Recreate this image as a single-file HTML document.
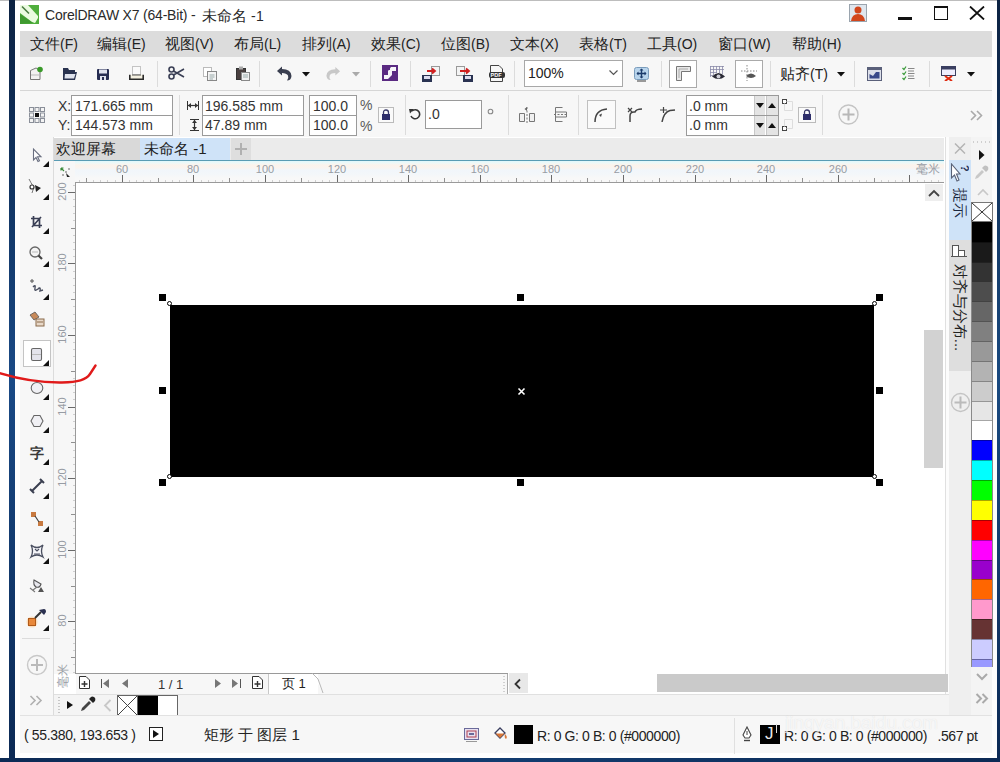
<!DOCTYPE html>
<html><head><meta charset="utf-8">
<style>
*{margin:0;padding:0;box-sizing:border-box}
html,body{width:1000px;height:762px;overflow:hidden;background:#fff}
body{position:relative;font-family:"Liberation Sans",sans-serif;color:#222}
.a{position:absolute}
.t{position:absolute;white-space:nowrap;line-height:1}
.sep{position:absolute;width:1px;background:#dcdcdc}
.box{position:absolute;background:#fff;border:1px solid #8a8a8a}
.rl{font-size:11px;color:#979ca4;width:40px;text-align:center}
.rv{transform:rotate(-90deg)}
.tri{position:absolute;width:0;height:0;border-left:6px solid transparent;border-bottom:6px solid #111}
</style></head><body>
<!-- window frame -->
<div class="a" style="left:0;top:0;width:1000px;height:1px;background:#bdbdbd"></div>
<div class="a" style="left:9px;top:0;width:6px;height:762px;background:linear-gradient(#0c2242,#1a4a86 50%,#0c2a55)"></div>
<div class="a" style="left:997px;top:0;width:3px;height:762px;background:linear-gradient(#0c2242,#1a4a80 50%,#0c2a55)"></div>
<div class="a" style="left:0;top:758px;width:1000px;height:4px;background:linear-gradient(90deg,#0c2a55,#123c70 50%,#0c2a55)"></div>

<!-- title bar -->
<div id="title">
<svg class="a" style="left:20px;top:5px" width="19" height="19" viewBox="0 0 19 19"><rect width="19" height="19" fill="#4fae3c"/><path d="M0 0 L8 0 L18 11 L18 13 L15 18 L12 17 L0 8 Z" fill="#eafbe0"/><path d="M2 1.5 L9 8.5" stroke="#4a7a40" stroke-width="1.6"/><path d="M0 9 L13 18 L0 19 Z" fill="#3f9a30"/></svg>
<div class="t" style="left:45px;top:8px;font-size:14px;color:#2a2a2a;letter-spacing:-0.2px">CorelDRAW X7 (64-Bit) -</div><div class="t" style="left:202px;top:8px;font-size:14px;color:#2a2a2a"><span style="font-size:15px">未命名</span> <span style="letter-spacing:0.5px">-1</span></div>
<svg class="a" style="left:849px;top:4px" width="18" height="18" viewBox="0 0 18 18"><rect x="0.5" y="0.5" width="17" height="17" fill="#dfe6ee" stroke="#9aa4ae"/><circle cx="9" cy="6" r="3.5" fill="#d2461c"/><path d="M2 17 Q3 10 9 10 Q15 10 16 17 Z" fill="#d2461c"/></svg>
<div class="a" style="left:898px;top:17px;width:14px;height:3px;background:#111"></div>
<div class="a" style="left:934px;top:6px;width:14px;height:14px;border:1.5px solid #111;border-top-width:2.5px"></div>
<svg class="a" style="left:969px;top:6px" width="16" height="14" viewBox="0 0 16 14"><path d="M1 0.5 L15 13.5 M15 0.5 L1 13.5" stroke="#111" stroke-width="1.8"/></svg>
</div>

<!-- menu bar -->
<div class="a" style="left:20px;top:31px;width:972px;height:26px;background:#dcdcdc"></div>
<div id="menu" style="font-size:15px">
<div class="t" style="left:30px;top:36px">文件<span style="font-size:14px">(F)</span></div>
<div class="t" style="left:97px;top:36px">编辑<span style="font-size:14px">(E)</span></div>
<div class="t" style="left:165px;top:36px">视图<span style="font-size:14px">(V)</span></div>
<div class="t" style="left:234px;top:36px">布局<span style="font-size:14px">(L)</span></div>
<div class="t" style="left:302px;top:36px">排列<span style="font-size:14px">(A)</span></div>
<div class="t" style="left:371px;top:36px">效果<span style="font-size:14px">(C)</span></div>
<div class="t" style="left:441px;top:36px">位图<span style="font-size:14px">(B)</span></div>
<div class="t" style="left:510px;top:36px">文本<span style="font-size:14px">(X)</span></div>
<div class="t" style="left:579px;top:36px">表格<span style="font-size:14px">(T)</span></div>
<div class="t" style="left:647px;top:36px">工具<span style="font-size:14px">(O)</span></div>
<div class="t" style="left:718px;top:36px">窗口<span style="font-size:14px">(W)</span></div>
<div class="t" style="left:792px;top:36px">帮助<span style="font-size:14px">(H)</span></div>
</div>

<!-- toolbar -->
<div class="a" style="left:20px;top:57px;width:972px;height:33px;background:#f7f7f7"></div>
<div class="a" style="left:20px;top:90px;width:972px;height:1px;background:#d6d6d6"></div>

<!-- toolbar icons -->
<svg class="a" style="left:29px;top:66px" width="15" height="15" viewBox="0 0 15 15"><path d="M1.5 4.5 L7 2 L11 4 L11 13.5 L1.5 13.5 Z" fill="#f2f2f2" stroke="#777"/><path d="M2 9 L11 9" stroke="#bbb"/><circle cx="11" cy="3.5" r="2.8" fill="#3a9a2a"/></svg>
<svg class="a" style="left:62px;top:67px" width="16" height="14" viewBox="0 0 16 14"><path d="M1 1 L6 1 L7 3 L13 3 L13 5 L1 5 Z" fill="#2a3350"/><path d="M1 5 L15 5 L13 13 L1 13 Z" fill="#2a3350"/><path d="M3 7 L13.5 7 L12 11.5 L2.5 11.5 Z" fill="#dfe3ee"/></svg>
<svg class="a" style="left:97px;top:69px" width="12" height="11" viewBox="0 0 12 11"><rect x="0" y="0" width="12" height="11" rx="1" fill="#262d52"/><rect x="2" y="0.5" width="8" height="4" fill="#dfe2ee"/><rect x="3" y="7" width="6" height="4" fill="#dfe2ee"/><rect x="5" y="8" width="2" height="3" fill="#262d52"/></svg>
<svg class="a" style="left:129px;top:66px" width="15" height="15" viewBox="0 0 15 15"><rect x="3.5" y="0.5" width="8" height="8" fill="#fafafa" stroke="#c4c4c4"/><path d="M0.8 8.8 L0.8 13.2 L14.2 13.2 L14.2 8.8" fill="#f4f0e0" stroke="#2a2a2a" stroke-width="1.6"/><path d="M3 9 H12" stroke="#555"/></svg>
<div class="sep" style="left:157px;top:61px;height:26px"></div>
<svg class="a" style="left:168px;top:66px" width="17" height="14" viewBox="0 0 17 14"><circle cx="3.5" cy="3.5" r="2.5" fill="none" stroke="#3a3f55" stroke-width="1.6"/><circle cx="3.5" cy="10.5" r="2.5" fill="none" stroke="#3a3f55" stroke-width="1.6"/><path d="M5.5 5 L16 11 M5.5 9 L16 3" stroke="#3a3f55" stroke-width="1.6"/></svg>
<svg class="a" style="left:203px;top:67px" width="14" height="14" viewBox="0 0 14 14"><rect x="0.5" y="0.5" width="8" height="9" fill="#fff" stroke="#bbb"/><rect x="4.5" y="4.5" width="9" height="9" fill="#f4f4f4" stroke="#888"/><path d="M6.5 8 L11.5 8 M6.5 10 L11.5 10 M6.5 12 L10 12" stroke="#9aa"/></svg>
<svg class="a" style="left:236px;top:66px" width="14" height="15" viewBox="0 0 14 15"><rect x="0.5" y="2.5" width="9" height="11" fill="#4a4040" stroke="#333"/><rect x="3" y="0.5" width="4" height="3" fill="#aaa"/><rect x="5.5" y="6.5" width="8" height="8" fill="#f0f0f0" stroke="#888"/><path d="M7 9 L12 9 M7 11 L12 11" stroke="#9aa"/></svg>
<div class="sep" style="left:259px;top:61px;height:26px"></div>
<svg class="a" style="left:276px;top:66px" width="17" height="15" viewBox="0 0 17 15"><path d="M1 5 L6 0.5 L6 3 Q15 3 15.5 10 Q15 14.5 11 14.5 Q13 12 12 9.5 Q10.5 7 6 7 L6 9.5 Z" fill="#3a3f50"/></svg>
<svg class="a" style="left:302px;top:72px" width="8" height="5" viewBox="0 0 8 5"><path d="M0 0 L8 0 L4 4.5 Z" fill="#111"/></svg>
<svg class="a" style="left:325px;top:66px" width="16" height="15" viewBox="0 0 17 15"><path d="M16 5 L11 0.5 L11 3 Q2 3 1.5 10 Q2 14.5 6 14.5 Q4 12 5 9.5 Q6.5 7 11 7 L11 9.5 Z" fill="#c8c8c8"/></svg>
<svg class="a" style="left:352px;top:72px" width="8" height="5" viewBox="0 0 8 5"><path d="M0 0 L8 0 L4 4.5 Z" fill="#aaa"/></svg>
<div class="sep" style="left:370px;top:61px;height:26px"></div>
<svg class="a" style="left:382px;top:65px" width="16" height="16" viewBox="0 0 16 16"><rect width="16" height="16" fill="#5a2a82"/><path d="M9 2 L14 2 L14 6 L10 6 L10 10 L6 14 L2 14 L2 10 L6 10 L6 6 Z" fill="#fff" opacity="0.95"/><path d="M4 3 L8 3 L8 5 L4 5 Z M9 11 L13 11 L13 14 L9 14 Z" fill="#5a2a82"/></svg>
<div class="sep" style="left:410px;top:61px;height:26px"></div>
<svg class="a" style="left:422px;top:66px" width="18" height="16" viewBox="0 0 18 16"><rect x="9.5" y="0.5" width="8" height="9" fill="#f4f4f4" stroke="#999"/><path d="M5 5 L13 5 M10 2.5 L13 5 L10 7.5" stroke="#d02020" stroke-width="1.8" fill="none"/><rect x="0" y="9" width="10" height="7" fill="#2a3352"/><rect x="2" y="10" width="6" height="3" fill="#dde"/></svg>
<svg class="a" style="left:456px;top:66px" width="17" height="16" viewBox="0 0 17 16"><rect x="0.5" y="0.5" width="8" height="9" fill="#f4f4f4" stroke="#999"/><path d="M4 5 L13 5 M10 2.5 L13 5 L10 7.5" stroke="#d02020" stroke-width="1.8" fill="none"/><rect x="7" y="9" width="10" height="7" fill="#2a3352"/><rect x="9" y="10" width="6" height="3" fill="#dde"/></svg>
<svg class="a" style="left:489px;top:65px" width="16" height="17" viewBox="0 0 16 17"><path d="M1.5 0.5 L10 0.5 L13.5 4 L13.5 16.5 L1.5 16.5 Z" fill="#f7f7f7" stroke="#444"/><rect x="0" y="7" width="16" height="6" rx="2" fill="#333"/><text x="1.5" y="12" font-size="5.5" font-family="Liberation Sans" font-weight="bold" fill="#fff">PDF</text></svg>
<div class="sep" style="left:514px;top:61px;height:26px"></div>
<div class="box" style="left:524px;top:60px;width:99px;height:27px;border-color:#a8a8a8"></div>
<div class="t" style="left:528px;top:66px;font-size:14px;color:#222">100%</div>
<svg class="a" style="left:609px;top:70px" width="9" height="6" viewBox="0 0 9 6"><path d="M0.5 0.5 L4.5 4.5 L8.5 0.5" stroke="#555" stroke-width="1.2" fill="none"/></svg>
<svg class="a" style="left:634px;top:67px" width="15" height="15" viewBox="0 0 15 15"><rect x="0.5" y="0.5" width="14" height="12" rx="2" fill="#b8d4ec" stroke="#7a9cbc"/><path d="M7.5 2 L7.5 11 M3 6.5 L12 6.5" stroke="#1a3a6a" stroke-width="1.4"/><path d="M7.5 1.5 L5.5 3.5 L9.5 3.5 Z M7.5 11.5 L5.5 9.5 L9.5 9.5 Z M2.5 6.5 L4.5 4.5 L4.5 8.5 Z M12.5 6.5 L10.5 4.5 L10.5 8.5 Z" fill="#1a3a6a"/><rect x="3" y="13" width="9" height="2" fill="#999"/></svg>
<div class="sep" style="left:661px;top:61px;height:26px"></div>
<div class="box" style="left:669px;top:60px;width:28px;height:28px;border-color:#aaa"></div>
<svg class="a" style="left:676px;top:66px" width="15" height="15" viewBox="0 0 15 15"><path d="M0.5 0.5 L14.5 0.5 L14.5 5.5 L5.5 5.5 L5.5 14.5 L0.5 14.5 Z" fill="#e8e8e8" stroke="#777"/><path d="M3 3 L12 3 M3 3 L3 12" stroke="#aaa"/></svg>
<svg class="a" style="left:709px;top:65px" width="17" height="16" viewBox="0 0 17 16"><path d="M1.5 1V12 M4.5 1V10 M7.5 1V8 M10.5 1V8 M13.5 1V9 M1 1.5H15 M1 4.5H15 M1 7.5H8 M1 10.5H4" stroke="#8a8aa8" stroke-width="0.8"/><path d="M3 11.5 Q9.5 4.5 16 11.5 Q9.5 16.5 3 11.5 Z" fill="#2a2a35"/><circle cx="9.5" cy="11.5" r="2" fill="#cfcfd8"/></svg>
<div class="box" style="left:735px;top:60px;width:28px;height:28px;border-color:#aaa"></div>
<svg class="a" style="left:741px;top:65px" width="17" height="16" viewBox="0 0 17 16"><path d="M6 0 L6 16" stroke="#888" stroke-dasharray="1.5 1.5"/><path d="M0 6 L16 6" stroke="#888" stroke-dasharray="1.5 1.5"/><path d="M5 11 Q10 6 15 11 Q10 15 5 11 Z" fill="#555"/></svg>
<div class="sep" style="left:770px;top:61px;height:26px"></div>
<div class="t" style="left:780px;top:66px;font-size:15px;color:#222">贴齐<span style="font-size:14px">(T)</span></div>
<svg class="a" style="left:837px;top:72px" width="8" height="5" viewBox="0 0 8 5"><path d="M0 0 L8 0 L4 4.5 Z" fill="#111"/></svg>
<div class="sep" style="left:854px;top:61px;height:26px"></div>
<svg class="a" style="left:867px;top:67px" width="15" height="14" viewBox="0 0 15 14"><rect x="0.5" y="0.5" width="14" height="13" fill="#dde0ea" stroke="#5a607a"/><rect x="0.5" y="0.5" width="14" height="2.5" fill="#5a607a"/><path d="M2.5 11.5 L2.5 7 L6 9 L9 5 L12.5 5 L12.5 11.5 Z" fill="#3a4a8a"/></svg>
<svg class="a" style="left:902px;top:66px" width="13" height="15" viewBox="0 0 13 15"><path d="M0.5 2 L2 3.5 L4 0.5 M0.5 7 L2 8.5 L4 5.5 M0.5 12 L2 13.5 L4 10.5" stroke="#3a9a3a" stroke-width="1.2" fill="none"/><path d="M6 2.5 L12.5 2.5 M6 5 L12 5 M6 7.5 L12.5 7.5 M6 10 L12 10 M6 12.5 L12.5 12.5" stroke="#888"/></svg>
<div class="sep" style="left:929px;top:61px;height:26px"></div>
<svg class="a" style="left:941px;top:66px" width="15" height="15" viewBox="0 0 15 15"><rect x="0.5" y="0.5" width="14" height="9" fill="#eef" stroke="#3a3f60"/><rect x="0.5" y="0.5" width="14" height="3" fill="#3a3f60"/><path d="M4 10 L11 15 M11 10 L4 15" stroke="#e02a10" stroke-width="2"/></svg>
<svg class="a" style="left:967px;top:72px" width="8" height="5" viewBox="0 0 8 5"><path d="M0 0 L8 0 L4 4.5 Z" fill="#111"/></svg>

<!-- property bar -->
<div class="a" style="left:20px;top:91px;width:972px;height:46px;background:#f7f7f7"></div>

<!-- property bar content -->
<svg class="a" style="left:29px;top:107px" width="16" height="16" viewBox="0 0 16 16"><g fill="#f4f4f4" stroke="#8a8f99" stroke-width="1"><rect x="0.5" y="0.5" width="4" height="4"/><rect x="6" y="0.5" width="4" height="4"/><rect x="11.5" y="0.5" width="4" height="4"/><rect x="0.5" y="6" width="4" height="4"/><rect x="11.5" y="6" width="4" height="4"/><rect x="0.5" y="11.5" width="4" height="4"/><rect x="6" y="11.5" width="4" height="4"/><rect x="11.5" y="11.5" width="4" height="4"/></g><rect x="6" y="6" width="4" height="4" fill="#111"/></svg>
<div class="t" style="left:58px;top:99px;font-size:14px;color:#333">X:</div>
<div class="t" style="left:58px;top:118px;font-size:14px;color:#333">Y:</div>
<div class="box" style="left:71px;top:95px;width:102px;height:21px;border-color:#9a9a9a"></div>
<div class="box" style="left:71px;top:115px;width:102px;height:21px;border-color:#9a9a9a"></div>
<div class="t" style="left:75px;top:99px;font-size:14px;color:#333">171.665 mm</div>
<div class="t" style="left:75px;top:118px;font-size:14px;color:#333">144.573 mm</div>
<div class="sep" style="left:179px;top:95px;height:40px"></div>
<svg class="a" style="left:187px;top:101px" width="12" height="9" viewBox="0 0 12 9"><path d="M0.5 0 L0.5 9 M11.5 0 L11.5 9" stroke="#333"/><path d="M1 4.5 L11 4.5" stroke="#333" stroke-width="1.2"/><path d="M1 4.5 L4 2 L4 7 Z M11 4.5 L8 2 L8 7 Z" fill="#333"/></svg>
<svg class="a" style="left:190px;top:119px" width="9" height="12" viewBox="0 0 9 12"><path d="M0 0.5 L9 0.5 M0 11.5 L9 11.5" stroke="#333"/><path d="M4.5 1 L4.5 11" stroke="#333" stroke-width="1.2"/><path d="M4.5 1 L2 4 L7 4 Z M4.5 11 L2 8 L7 8 Z" fill="#333"/></svg>
<div class="box" style="left:202px;top:95px;width:102px;height:21px;border-color:#9a9a9a"></div>
<div class="box" style="left:202px;top:115px;width:102px;height:21px;border-color:#9a9a9a"></div>
<div class="t" style="left:205px;top:99px;font-size:14px;color:#333">196.585 mm</div>
<div class="t" style="left:205px;top:118px;font-size:14px;color:#333">47.89 mm</div>
<div class="box" style="left:309px;top:95px;width:48px;height:21px;border-color:#9a9a9a"></div>
<div class="box" style="left:309px;top:115px;width:48px;height:21px;border-color:#9a9a9a"></div>
<div class="t" style="left:313px;top:99px;font-size:14px;color:#333">100.0</div>
<div class="t" style="left:313px;top:118px;font-size:14px;color:#333">100.0</div>
<div class="t" style="left:360px;top:98px;font-size:14px;color:#5a5a5a">%</div>
<div class="t" style="left:360px;top:119px;font-size:14px;color:#5a5a5a">%</div>
<div class="a" style="left:378px;top:107px;width:16px;height:16px;border:1px solid #bbb;background:#fafafa"></div>
<svg class="a" style="left:381px;top:109px" width="10" height="11" viewBox="0 0 10 11"><path d="M2.5 5 L2.5 3.5 Q2.5 1 5 1 Q7.5 1 7.5 3.5 L7.5 5" stroke="#3a3a6a" stroke-width="1.3" fill="none"/><rect x="1" y="5" width="8" height="6" fill="#2e2e6a"/></svg>
<div class="sep" style="left:405px;top:95px;height:40px"></div>
<svg class="a" style="left:409px;top:108px" width="12" height="12" viewBox="0 0 12 12"><path d="M3 3 A4.5 4.5 0 1 1 2 8" stroke="#333" stroke-width="1.6" fill="none"/><path d="M0 1 L5 1 L1 5.5 Z" fill="#333"/></svg>
<div class="box" style="left:425px;top:100px;width:57px;height:29px;border-color:#9a9a9a"></div>
<div class="t" style="left:428px;top:107px;font-size:14px;color:#333">.0</div>
<svg class="a" style="left:487px;top:108px" width="7" height="7" viewBox="0 0 7 7"><circle cx="3.5" cy="3.5" r="2.3" stroke="#888" stroke-width="1.1" fill="none"/></svg>
<div class="sep" style="left:508px;top:95px;height:40px"></div>
<svg class="a" style="left:519px;top:107px" width="16" height="16" viewBox="0 0 16 16"><path d="M0.5 14.5 L0.5 6.5 L5.5 6.5 L5.5 14.5 Z M10.5 14.5 L10.5 6.5 L15.5 6.5 L15.5 14.5 Z" stroke="#777" fill="#f0f0f0"/><path d="M8 0 L8 16" stroke="#777" stroke-dasharray="2 1.5"/><path d="M5.5 2 L8 0 L8 4 Z" fill="#666"/></svg>
<svg class="a" style="left:554px;top:107px" width="14" height="15" viewBox="0 0 14 15"><path d="M0 7.5 L14 7.5" stroke="#777" stroke-dasharray="2 1.5"/><path d="M1.5 0.5 L8.5 0.5 M1.5 0.5 L1.5 14.5 L8.5 14.5 M1.5 5 L12.5 5 L12.5 10 L1.5 10" stroke="#777" fill="none"/></svg>
<div class="sep" style="left:578px;top:95px;height:40px"></div>
<div class="box" style="left:587px;top:100px;width:29px;height:29px;border-color:#c0c0c0;background:#fafafa"></div>
<svg class="a" style="left:593px;top:106px" width="17" height="17" viewBox="0 0 17 17"><path d="M2 16 Q2 4 14 3" stroke="#444" stroke-width="1.5" fill="none"/><path d="M6 9 L9 7.5 L8 11 Z" fill="#444"/></svg>
<svg class="a" style="left:627px;top:107px" width="16" height="15" viewBox="0 0 16 15"><path d="M3 15 L3 9 Q3 5 7 5 L8 5 Q9 2 15 2" stroke="#444" stroke-width="1.5" fill="none"/><path d="M1 1 L5 5 M5 1 L1 5" stroke="#444" stroke-width="1.2"/></svg>
<svg class="a" style="left:660px;top:107px" width="16" height="15" viewBox="0 0 16 15"><path d="M2 15 Q4 5 10 3.5 L15 3" stroke="#444" stroke-width="1.5" fill="none"/><path d="M0 3 L7 3 M3.5 0 L3.5 6" stroke="#444" stroke-width="1.2"/></svg>
<div class="box" style="left:686px;top:95px;width:93px;height:21px;border-color:#9a9a9a"></div>
<div class="box" style="left:686px;top:115px;width:93px;height:21px;border-color:#9a9a9a"></div>
<div class="a" style="left:754px;top:96px;width:11px;height:19px;background:#e4e4e4;border-left:1px solid #c8c8c8"></div>
<div class="a" style="left:766px;top:96px;width:12px;height:19px;background:#e4e4e4;border-left:1px solid #c8c8c8"></div>
<div class="a" style="left:754px;top:116px;width:11px;height:19px;background:#e4e4e4;border-left:1px solid #c8c8c8"></div>
<div class="a" style="left:766px;top:116px;width:12px;height:19px;background:#e4e4e4;border-left:1px solid #c8c8c8"></div>
<svg class="a" style="left:756px;top:103px" width="8" height="5"><path d="M0 0 L8 0 L4 5 Z" fill="#111"/></svg>
<svg class="a" style="left:768px;top:103px" width="8" height="5"><path d="M0 5 L8 5 L4 0 Z" fill="#111"/></svg>
<svg class="a" style="left:756px;top:123px" width="8" height="5"><path d="M0 0 L8 0 L4 5 Z" fill="#111"/></svg>
<svg class="a" style="left:768px;top:123px" width="8" height="5"><path d="M0 5 L8 5 L4 0 Z" fill="#111"/></svg>
<div class="t" style="left:689px;top:99px;font-size:14px;color:#333">.0 mm</div>
<div class="t" style="left:689px;top:118px;font-size:14px;color:#333">.0 mm</div>
<svg class="a" style="left:782px;top:99px" width="11" height="12" viewBox="0 0 11 12"><rect x="0.5" y="0.5" width="4" height="4" fill="#fff" stroke="#444"/><path d="M4.5 2.5 L10.5 2.5 L10.5 11.5 L2.5 11.5 L2.5 4.5" stroke="#ddd" fill="none"/></svg>
<svg class="a" style="left:782px;top:119px" width="11" height="12" viewBox="0 0 11 12"><rect x="0.5" y="7.5" width="4" height="4" fill="#fff" stroke="#444"/><path d="M2.5 7.5 L2.5 0.5 L10.5 0.5 L10.5 9.5 L4.5 9.5" stroke="#ddd" fill="none"/></svg>
<div class="a" style="left:798px;top:107px;width:18px;height:16px;border:1px solid #bbb;background:#fafafa"></div>
<svg class="a" style="left:802px;top:109px" width="10" height="11" viewBox="0 0 10 11"><path d="M2.5 5 L2.5 3.5 Q2.5 1 5 1 Q7.5 1 7.5 3.5 L7.5 5" stroke="#3a3a6a" stroke-width="1.3" fill="none"/><rect x="1" y="5" width="8" height="6" fill="#2e2e6a"/></svg>
<div class="sep" style="left:822px;top:95px;height:40px"></div>
<svg class="a" style="left:838px;top:104px" width="21" height="21" viewBox="0 0 21 21"><circle cx="10.5" cy="10.5" r="9.5" stroke="#c4c4c4" stroke-width="1.4" fill="none"/><path d="M10.5 4.5 L10.5 16.5 M4.5 10.5 L16.5 10.5" stroke="#b8b8b8" stroke-width="2"/></svg>
<svg class="a" style="left:970px;top:110px" width="14" height="11" viewBox="0 0 14 11"><path d="M1 1 L5.5 5.5 L1 10 M7 1 L11.5 5.5 L7 10" stroke="#aaa" stroke-width="1.6" fill="none"/></svg>

<!-- tab bar -->
<div class="a" style="left:54px;top:138px;width:890px;height:22px;background:#ebebeb"></div>

<!-- left toolbox -->
<div class="a" style="left:20px;top:137px;width:33px;height:579px;background:#f7f7f7"></div>
<div class="a" style="left:53px;top:137px;width:1px;height:579px;background:#dcdcdc"></div>

<!-- toolbox -->
<svg class="a" style="left:20px;top:138px" width="34" height="580" viewBox="0 0 34 580">
<g fill="#111">
<path d="M29 23 L29 29 L23 29 Z"/>
<path d="M29 56 L29 62 L23 62 Z"/>
<path d="M29 90 L29 96 L23 96 Z"/>
<path d="M29 123 L29 129 L23 129 Z"/>
<path d="M29 156 L29 162 L23 162 Z"/>
<path d="M29 223 L29 229 L23 229 Z"/>
<path d="M29 256 L29 262 L23 262 Z"/>
<path d="M29 289 L29 295 L23 295 Z"/>
<path d="M29 321 L29 327 L23 327 Z"/>
<path d="M29 355 L29 361 L23 361 Z"/>
<path d="M29 388 L29 394 L23 394 Z"/>
<path d="M29 420 L29 426 L23 426 Z"/>
<path d="M29 487 L29 493 L23 493 Z"/>
</g>
<!-- pick -->
<path d="M13.5 11 L13.5 22 L16 19.5 L18 23.5 L19.5 22.8 L17.5 18.8 L21 18.8 Z" fill="#fff" stroke="#6a6f80" stroke-width="1.1"/>
<!-- shape -->
<path d="M9 41 Q11 45 13 48 Q14 51 12 55" stroke="#777" fill="none" stroke-width="1"/><circle cx="12" cy="49" r="2" fill="#fff" stroke="#333" stroke-width="1.2"/><path d="M15 47 L21 50 L16 54 Z" fill="#222"/>
<!-- crop -->
<path d="M13.5 78 V87.5 H22 M11 80.5 H19.5 V90 M12 89 L21 79" stroke="#3a3f55" stroke-width="1.7" fill="none"/>
<!-- zoom -->
<circle cx="15" cy="114" r="5" fill="#f4f4f4" stroke="#666" stroke-width="1.3"/><path d="M18.5 117.5 L22 121" stroke="#444" stroke-width="2.2"/><path d="M12 114 H18" stroke="#bbb"/>
<!-- freehand -->
<path d="M10 143 H14 M12 141 V145" stroke="#555" stroke-width="1"/><path d="M13 149 Q16 146 15 150 Q14 154 18 151 Q21 148 20 153 L23 152" stroke="#4a4f60" stroke-width="1.4" fill="none"/>
<!-- smart fill -->
<path d="M10 177 L15 174 L19 179 L14 182 Z" fill="#c88a5a" stroke="#555" stroke-width="0.8"/><rect x="16" y="181" width="8" height="7" fill="#e8d8c8" stroke="#8a6a4a"/><path d="M17 184H23" stroke="#8a6a4a"/>
<!-- rect (selected) -->
<rect x="3.5" y="202.5" width="27" height="26" fill="#fff" stroke="#c4c4c4"/>
<rect x="11.5" y="210.5" width="10" height="12" rx="1.5" fill="#e4e4ec" stroke="#666" stroke-width="1.1"/><path d="M12 216.5 H21" stroke="#bbb"/>
<path d="M29 222 L29 228 L23 228 Z" fill="#111"/>
<!-- ellipse -->
<ellipse cx="17" cy="250" rx="5.8" ry="5.5" fill="#f0f0f4" stroke="#666" stroke-width="1.1"/>
<!-- polygon -->
<path d="M14 277.5 L20 277.5 L23 283 L20 288.5 L14 288.5 L11 283 Z" fill="#f0f0f4" stroke="#666" stroke-width="1.1"/>
<!-- text -->
<text x="9.5" y="320" font-size="14" fill="#3a3a3a" font-weight="bold">字</text>
<!-- dimension -->
<path d="M12 353 L22 343 M10 351 L14 355 M20 341 L24 345" stroke="#3a3f50" stroke-width="2"/>
<!-- connector -->
<rect x="11" y="374" width="5" height="5" fill="#c87a40"/><rect x="18" y="383" width="5" height="5" fill="#c87a40"/><path d="M15 378 L19 384" stroke="#444" stroke-width="1.2"/>
<!-- blend -->
<path d="M11 407 Q17 412 23 407 Q20 413 23 419 Q17 415 11 419 Q14 413 11 407 Z" fill="#f4f4f8" stroke="#4a4f60" stroke-width="1.3"/><path d="M15 411 L17 413 L19 411 M14 416 H20" stroke="#4a4f60" stroke-width="1.1" fill="none"/>
<!-- transparency -->
<path d="M14 442 L21 446 Q20 450 16 449 Q13 447 14 442 Z" fill="#e8e8ee" stroke="#555" stroke-width="1.1"/><path d="M17 449 L13 452 M10 450 L15 454" stroke="#777" stroke-width="1.1"/><path d="M18 454 L21 449 L24 454 Z" fill="#555"/>
<!-- fill / eyedropper -->
<circle cx="12" cy="484" r="5.5" fill="#fbd8b0" opacity="0.8"/><rect x="8.5" y="480.5" width="7" height="7" fill="#e8883a" stroke="#b05a1a"/><path d="M15 480 L21 474" stroke="#333" stroke-width="2"/><path d="M19 472 L24 477 L26 474 Q26 471 24 471 Z" fill="#2a3050"/>
<!-- separator -->
<path d="M2 500.5 H30" stroke="#dcdcdc"/>
<!-- plus -->
<circle cx="17" cy="527" r="9.5" fill="none" stroke="#c8c8c8" stroke-width="1.4"/><path d="M17 521 V533 M11 527 H23" stroke="#bababa" stroke-width="2"/>
<!-- >> -->
<path d="M10.5 558 L15 562.5 L10.5 567 M16.5 558 L21 562.5 L16.5 567" stroke="#b0b0b0" stroke-width="1.6" fill="none"/>
</svg>

<!-- rulers -->
<div class="a" style="left:54px;top:160px;width:890px;height:1px;background:#5a9cb4"></div>
<div class="a" style="left:54px;top:161px;width:890px;height:21px;background:linear-gradient(#e2f8fb 0px,#eef9f8 2px,#fcf3eb 4px,#f9f4f0 7px,#f1f6fb 9px,#f4f7f9 14px,#f8f8f8 17px)"></div>
<div class="a" style="left:54px;top:161px;width:21px;height:513px;background:#f7f7f7"></div>
<div class="a" style="left:75px;top:182px;width:869px;height:1px;background:#9a9a9a"></div>
<div class="a" style="left:75px;top:182px;width:1px;height:492px;background:#9a9a9a"></div>

<!-- canvas -->
<div class="a" style="left:76px;top:183px;width:868px;height:491px;background:#fff"></div>
<div class="a" style="left:170px;top:305px;width:704px;height:172px;background:#000"></div>

<svg class="a" style="left:0;top:0" width="1000" height="762"><path d="M122.5 175V182M193.5 175V182M265.5 175V182M337.5 175V182M408.5 175V182M480.5 175V182M551.5 175V182M623.5 175V182M695.5 175V182M766.5 175V182M838.5 175V182M909.5 175V182M68 621.5H75M68 550.5H75M68 478.5H75M68 407.5H75M68 335.5H75M68 263.5H75M68 192.5H75" stroke="#6a6a6a"/><path d="M86.5 178V182M158.5 178V182M229.5 178V182M301.5 178V182M372.5 178V182M444.5 178V182M516.5 178V182M587.5 178V182M659.5 178V182M730.5 178V182M802.5 178V182M874.5 178V182M71 657.5H75M71 586.5H75M71 514.5H75M71 442.5H75M71 371.5H75M71 299.5H75M71 228.5H75" stroke="#909090"/><path d="M79.5 180V182M93.5 180V182M100.5 180V182M107.5 180V182M115.5 180V182M129.5 180V182M136.5 180V182M143.5 180V182M150.5 180V182M165.5 180V182M172.5 180V182M179.5 180V182M186.5 180V182M201.5 180V182M208.5 180V182M215.5 180V182M222.5 180V182M236.5 180V182M243.5 180V182M251.5 180V182M258.5 180V182M272.5 180V182M279.5 180V182M286.5 180V182M294.5 180V182M308.5 180V182M315.5 180V182M322.5 180V182M329.5 180V182M344.5 180V182M351.5 180V182M358.5 180V182M365.5 180V182M380.5 180V182M387.5 180V182M394.5 180V182M401.5 180V182M415.5 180V182M422.5 180V182M430.5 180V182M437.5 180V182M451.5 180V182M458.5 180V182M465.5 180V182M473.5 180V182M487.5 180V182M494.5 180V182M501.5 180V182M508.5 180V182M523.5 180V182M530.5 180V182M537.5 180V182M544.5 180V182M559.5 180V182M566.5 180V182M573.5 180V182M580.5 180V182M594.5 180V182M601.5 180V182M609.5 180V182M616.5 180V182M630.5 180V182M637.5 180V182M644.5 180V182M652.5 180V182M666.5 180V182M673.5 180V182M680.5 180V182M687.5 180V182M702.5 180V182M709.5 180V182M716.5 180V182M723.5 180V182M738.5 180V182M745.5 180V182M752.5 180V182M759.5 180V182M773.5 180V182M780.5 180V182M788.5 180V182M795.5 180V182M809.5 180V182M816.5 180V182M823.5 180V182M831.5 180V182M845.5 180V182M852.5 180V182M859.5 180V182M866.5 180V182M881.5 180V182M888.5 180V182M895.5 180V182M902.5 180V182M917.5 180V182M924.5 180V182M931.5 180V182M938.5 180V182M73 672.5H75M73 664.5H75M73 650.5H75M73 643.5H75M73 636.5H75M73 629.5H75M73 614.5H75M73 607.5H75M73 600.5H75M73 593.5H75M73 578.5H75M73 571.5H75M73 564.5H75M73 557.5H75M73 543.5H75M73 535.5H75M73 528.5H75M73 521.5H75M73 507.5H75M73 500.5H75M73 493.5H75M73 485.5H75M73 471.5H75M73 464.5H75M73 457.5H75M73 450.5H75M73 435.5H75M73 428.5H75M73 421.5H75M73 414.5H75M73 399.5H75M73 392.5H75M73 385.5H75M73 378.5H75M73 364.5H75M73 356.5H75M73 349.5H75M73 342.5H75M73 328.5H75M73 321.5H75M73 314.5H75M73 306.5H75M73 292.5H75M73 285.5H75M73 278.5H75M73 271.5H75M73 256.5H75M73 249.5H75M73 242.5H75M73 235.5H75M73 220.5H75M73 213.5H75M73 206.5H75M73 199.5H75M73 185.5H75" stroke="#cfcfcf"/></svg>
<div class="t rl" style="left:102px;top:164px">60</div>
<div class="t rl" style="left:173px;top:164px">80</div>
<div class="t rl" style="left:245px;top:164px">100</div>
<div class="t rl" style="left:317px;top:164px">120</div>
<div class="t rl" style="left:388px;top:164px">140</div>
<div class="t rl" style="left:460px;top:164px">160</div>
<div class="t rl" style="left:531px;top:164px">180</div>
<div class="t rl" style="left:603px;top:164px">200</div>
<div class="t rl" style="left:675px;top:164px">220</div>
<div class="t rl" style="left:746px;top:164px">240</div>
<div class="t rl" style="left:818px;top:164px">260</div>
<div class="t rl rv" style="left:42px;top:615px">80</div>
<div class="t rl rv" style="left:42px;top:544px">100</div>
<div class="t rl rv" style="left:42px;top:472px">120</div>
<div class="t rl rv" style="left:42px;top:401px">140</div>
<div class="t rl rv" style="left:42px;top:329px">160</div>
<div class="t rl rv" style="left:42px;top:257px">180</div>
<div class="t rl rv" style="left:42px;top:186px">200</div>
<!-- tabs -->
<div class="a" style="left:54px;top:138px;width:86px;height:22px;background:#d9d9d9"></div>
<div class="t" style="left:56px;top:141px;font-size:15.3px;color:#1a1a1a">欢迎屏幕</div>
<div class="a" style="left:140px;top:138px;width:90px;height:22px;background:#cfe3f8"></div>
<div class="t" style="left:144px;top:141px;font-size:15px;color:#222">未命名 -1</div>
<div class="a" style="left:231px;top:138px;width:20px;height:22px;background:#dedede"></div>
<svg class="a" style="left:234px;top:142px" width="14" height="14" viewBox="0 0 14 14"><path d="M7 1V13M1 7H13" stroke="#b0b0b0" stroke-width="2"/></svg>
<!-- ruler origin icon -->
<svg class="a" style="left:60px;top:167px" width="12" height="11" viewBox="0 0 12 11"><path d="M1 1 L4 4 M1 1 L3.5 1 M1 1 L1 3.5" stroke="#3a8a3a" stroke-width="1.2"/><circle cx="6" cy="5" r="0.8" fill="#555"/><circle cx="9" cy="2" r="0.8" fill="#555"/><circle cx="3" cy="8" r="0.8" fill="#555"/><path d="M6 6 L10 10 L7 10 Z" fill="#222"/></svg>
<div class="t rl" style="left:916px;top:163px;width:auto;font-size:12px">毫米</div>
<div class="t rl" style="left:43px;top:670px;width:40px;font-size:12px;transform:rotate(-90deg)">毫米</div>

<!-- canvas objects -->
<div class="a" style="left:159px;top:294px;width:7px;height:7px;background:#000"></div>
<div class="a" style="left:517px;top:294px;width:7px;height:7px;background:#000"></div>
<div class="a" style="left:876px;top:294px;width:7px;height:7px;background:#000"></div>
<div class="a" style="left:159px;top:387px;width:7px;height:7px;background:#000"></div>
<div class="a" style="left:876px;top:387px;width:7px;height:7px;background:#000"></div>
<div class="a" style="left:159px;top:479px;width:7px;height:7px;background:#000"></div>
<div class="a" style="left:517px;top:479px;width:7px;height:7px;background:#000"></div>
<div class="a" style="left:876px;top:479px;width:7px;height:7px;background:#000"></div>
<svg class="a" style="left:517px;top:387px" width="9" height="9" viewBox="0 0 9 9"><path d="M1.5 1.5 L7.5 7.5 M7.5 1.5 L1.5 7.5" stroke="#fff" stroke-width="1.6"/></svg>
<svg class="a" style="left:166px;top:300px" width="7" height="7"><circle cx="3.5" cy="3.5" r="2" fill="#fff" stroke="#000"/></svg>
<svg class="a" style="left:871px;top:300px" width="7" height="7"><circle cx="3.5" cy="3.5" r="2" fill="#fff" stroke="#000"/></svg>
<svg class="a" style="left:166px;top:473px" width="7" height="7"><circle cx="3.5" cy="3.5" r="2" fill="#fff" stroke="#000"/></svg>
<svg class="a" style="left:871px;top:473px" width="7" height="7"><circle cx="3.5" cy="3.5" r="2" fill="#fff" stroke="#000"/></svg>

<!-- vertical scrollbar -->
<div class="a" style="left:925px;top:184px;width:18px;height:17px;background:#eeeeee"></div>
<svg class="a" style="left:927px;top:187px" width="14" height="12" viewBox="0 0 14 12"><path d="M2 9 L7 4 L12 9" stroke="#444" stroke-width="1.8" fill="none"/></svg>
<div class="a" style="left:924px;top:330px;width:19px;height:138px;background:#d2d2d2"></div>

<!-- horizontal scroll / page nav -->
<div class="a" style="left:76px;top:673px;width:432px;height:1px;background:#9a9a9a"></div>
<div class="a" style="left:76px;top:674px;width:868px;height:20px;background:#fff"></div>
<div class="a" style="left:76px;top:674px;width:432px;height:20px;background:#f7f7f7;border-right:1px solid #aaa"></div>
<svg class="a" style="left:503px;top:676px" width="2" height="16"><path d="M1 0V16" stroke="#aaa" stroke-dasharray="1 2"/></svg>

<div class="a" style="left:268px;top:674px;width:50px;height:20px;background:#fff;border-left:1px solid #c8c8c8"></div>
<svg class="a" style="left:312px;top:673px" width="12" height="21"><path d="M0.5 0.5 L6 6 L11 20" stroke="#b8b8b8" fill="#fff"/></svg>
<div class="t" style="left:282px;top:677px;font-size:13px;color:#222">页 1</div>
<div class="a" style="left:509px;top:673px;width:19px;height:20px;background:#e8e8e8"></div>
<svg class="a" style="left:513px;top:678px" width="10" height="12" viewBox="0 0 10 12"><path d="M7 1.5 L2.5 6 L7 10.5" stroke="#333" stroke-width="1.8" fill="none"/></svg>

<div class="a" style="left:657px;top:674px;width:290px;height:18px;background:#cacaca"></div>
<svg class="a" style="left:79px;top:676px" width="11" height="13" viewBox="0 0 11 13"><path d="M0.5 0.5 L7 0.5 L10.5 4 L10.5 12.5 L0.5 12.5 Z" fill="#fff" stroke="#333"/><path d="M5.5 5 V11 M2.5 8 H8.5" stroke="#333" stroke-width="1.4"/></svg>
<svg class="a" style="left:101px;top:679px" width="8" height="9" viewBox="0 0 8 9"><path d="M0.5 0 V9" stroke="#555"/><path d="M8 0 L2 4.5 L8 9 Z" fill="#777"/></svg>
<svg class="a" style="left:122px;top:679px" width="6" height="9" viewBox="0 0 6 9"><path d="M6 0 L0 4.5 L6 9 Z" fill="#777"/></svg>
<div class="t" style="left:158px;top:678px;font-size:13px;color:#333">1 / 1</div>
<svg class="a" style="left:215px;top:679px" width="6" height="9" viewBox="0 0 6 9"><path d="M0 0 L6 4.5 L0 9 Z" fill="#777"/></svg>
<svg class="a" style="left:232px;top:679px" width="9" height="9" viewBox="0 0 9 9"><path d="M8.5 0 V9" stroke="#555"/><path d="M0 0 L6 4.5 L0 9 Z" fill="#777"/></svg>
<svg class="a" style="left:252px;top:676px" width="11" height="13" viewBox="0 0 11 13"><path d="M0.5 0.5 L7 0.5 L10.5 4 L10.5 12.5 L0.5 12.5 Z" fill="#fff" stroke="#333"/><path d="M5.5 5 V11 M2.5 8 H8.5" stroke="#333" stroke-width="1.4"/></svg>

<!-- palette row -->
<div class="a" style="left:54px;top:694px;width:890px;height:22px;background:#f4f4f4;border-top:1px solid #e0e0e0"></div>
<svg class="a" style="left:58px;top:697px" width="2" height="17"><path d="M1 0V17" stroke="#999" stroke-dasharray="1 2"/></svg>
<svg class="a" style="left:67px;top:701px" width="6" height="8"><path d="M0 0 L6 4 L0 8 Z" fill="#111"/></svg>
<svg class="a" style="left:80px;top:696px" width="16" height="16" viewBox="0 0 16 16"><path d="M1 15 L2 12 L9 5 L11 7 L4 14 Z" fill="#444"/><path d="M9 3 L13 7 L15 5 Q16 2 14 1 Q12 0 11 1 Z" fill="#222"/></svg>
<svg class="a" style="left:103px;top:699px" width="9" height="13" viewBox="0 0 9 13"><path d="M7.5 1 L2 6.5 L7.5 12" stroke="#c8c8c8" stroke-width="1.8" fill="none"/></svg>
<div class="a" style="left:117px;top:695px;width:61px;height:21px;border:1px solid #666;background:#fff"></div>
<svg class="a" style="left:118px;top:696px" width="19" height="19"><path d="M0 0 L19 19 M19 0 L0 19" stroke="#444"/></svg>
<div class="a" style="left:137px;top:695px;width:1px;height:21px;background:#666"></div>
<div class="a" style="left:138px;top:696px;width:20px;height:19px;background:#000"></div>

<!-- docker + palette -->
<div class="a" style="left:944px;top:137px;width:1px;height:579px;background:#fff"></div><div class="a" style="left:945px;top:137px;width:1px;height:579px;background:#e0e0e0"></div>
<div class="a" style="left:946px;top:137px;width:3px;height:579px;background:#fcfcfc"></div>
<div class="a" style="left:949px;top:137px;width:22px;height:579px;background:#efefef"></div>
<div class="a" style="left:971px;top:137px;width:22px;height:579px;background:#f4f4f4"></div>
<div class="a" style="left:992px;top:31px;width:5px;height:725px;background:#fdfdfd"></div>
<svg class="a" style="left:954px;top:143px" width="12" height="11" viewBox="0 0 12 11"><path d="M1 0.5 L11 10.5 M11 0.5 L1 10.5" stroke="#b4b4b4" stroke-width="1.5"/></svg>
<div class="a" style="left:949px;top:160px;width:22px;height:80px;background:#cfe3f8"></div>
<svg class="a" style="left:950px;top:163px" width="19" height="20" viewBox="0 0 19 20"><path d="M1.5 1 L1.5 15 L4.5 12 L7 18 L9 17 L6.5 11 L10 11 Z" fill="#fff" stroke="#5a6378" stroke-width="1.1"/><text x="0" y="0" font-size="11" font-weight="bold" fill="#2a3558" font-family="Liberation Sans" transform="translate(11 2) rotate(90)">?</text></svg>
<div class="t" style="left:945px;top:195px;width:30px;text-align:center;font-size:15px;color:#1c2840;transform:rotate(90deg)">提示</div>
<div class="a" style="left:949px;top:240px;width:22px;height:131px;background:#dedede"></div>
<svg class="a" style="left:951px;top:244px" width="16" height="14" viewBox="0 0 16 14"><rect x="1.5" y="1.5" width="6" height="11" fill="#fff" stroke="#555"/><rect x="7.5" y="6.5" width="6" height="6" fill="#fff" stroke="#555"/><path d="M0 12.5 H16" stroke="#555"/></svg>
<div class="t" style="left:910px;top:300px;width:100px;text-align:center;font-size:15px;color:#222;transform:rotate(90deg)">对齐与分布...</div>
<svg class="a" style="left:950px;top:392px" width="21" height="21" viewBox="0 0 21 21"><circle cx="10.5" cy="10.5" r="9" stroke="#c4c4c4" stroke-width="1.4" fill="none"/><path d="M10.5 4.5 V16.5 M4.5 10.5 H16.5" stroke="#bbb" stroke-width="2"/></svg>
<svg class="a" style="left:973px;top:141px" width="18" height="2"><path d="M0 1H18" stroke="#aaa" stroke-dasharray="1 3"/></svg>
<svg class="a" style="left:979px;top:150px" width="6" height="10"><path d="M0 0 L5.5 5 L0 10 Z" fill="#111"/></svg>
<svg class="a" style="left:973px;top:164px" width="16" height="16" viewBox="0 0 16 16"><path d="M2 15 L3 12 L9 6 L11 8 L5 14 Z" fill="#c8c8c8"/><path d="M9 4 L13 8 L15 6 Q16 3 14 2 Q12 1 11 2 Z" fill="#c0c0c0"/></svg>
<svg class="a" style="left:976px;top:187px" width="14" height="9" viewBox="0 0 14 9"><path d="M2 8 L7 3 L12 8" stroke="#c8c8c8" stroke-width="1.6" fill="none"/></svg>
<div class="a" style="left:971px;top:202px;width:22px;height:20px;background:#fff;border:1px solid #777"></div>
<svg class="a" style="left:972px;top:203px" width="20" height="18"><path d="M0 0 L20 18 M20 0 L0 18" stroke="#333" stroke-width="1"/></svg>
<div class="a" style="left:972px;top:222px;width:20px;height:20px;background:#000000;border-top:1px solid rgba(0,0,0,0.35)"></div>
<div class="a" style="left:972px;top:242px;width:20px;height:20px;background:#1a1a1a;border-top:1px solid rgba(0,0,0,0.35)"></div>
<div class="a" style="left:972px;top:262px;width:20px;height:19px;background:#333333;border-top:1px solid rgba(0,0,0,0.35)"></div>
<div class="a" style="left:972px;top:281px;width:20px;height:20px;background:#4d4d4d;border-top:1px solid rgba(0,0,0,0.35)"></div>
<div class="a" style="left:972px;top:301px;width:20px;height:20px;background:#666666;border-top:1px solid rgba(0,0,0,0.35)"></div>
<div class="a" style="left:972px;top:321px;width:20px;height:20px;background:#808080;border-top:1px solid rgba(0,0,0,0.35)"></div>
<div class="a" style="left:972px;top:341px;width:20px;height:20px;background:#999999;border-top:1px solid rgba(0,0,0,0.35)"></div>
<div class="a" style="left:972px;top:361px;width:20px;height:20px;background:#b3b3b3;border-top:1px solid rgba(0,0,0,0.35)"></div>
<div class="a" style="left:972px;top:381px;width:20px;height:20px;background:#cccccc;border-top:1px solid rgba(0,0,0,0.35)"></div>
<div class="a" style="left:972px;top:401px;width:20px;height:19px;background:#e6e6e6;border-top:1px solid rgba(0,0,0,0.35)"></div>
<div class="a" style="left:972px;top:420px;width:20px;height:20px;background:#ffffff;border-top:1px solid rgba(0,0,0,0.35)"></div>
<div class="a" style="left:972px;top:440px;width:20px;height:20px;background:#0000ff;border-top:1px solid rgba(0,0,0,0.35)"></div>
<div class="a" style="left:972px;top:460px;width:20px;height:20px;background:#00ffff;border-top:1px solid rgba(0,0,0,0.35)"></div>
<div class="a" style="left:972px;top:480px;width:20px;height:20px;background:#00ff00;border-top:1px solid rgba(0,0,0,0.35)"></div>
<div class="a" style="left:972px;top:500px;width:20px;height:20px;background:#ffff00;border-top:1px solid rgba(0,0,0,0.35)"></div>
<div class="a" style="left:972px;top:520px;width:20px;height:20px;background:#ff0000;border-top:1px solid rgba(0,0,0,0.35)"></div>
<div class="a" style="left:972px;top:540px;width:20px;height:20px;background:#ff00ff;border-top:1px solid rgba(0,0,0,0.35)"></div>
<div class="a" style="left:972px;top:560px;width:20px;height:19px;background:#9900cc;border-top:1px solid rgba(0,0,0,0.35)"></div>
<div class="a" style="left:972px;top:579px;width:20px;height:20px;background:#ff6600;border-top:1px solid rgba(0,0,0,0.35)"></div>
<div class="a" style="left:972px;top:599px;width:20px;height:20px;background:#ff99cc;border-top:1px solid rgba(0,0,0,0.35)"></div>
<div class="a" style="left:972px;top:619px;width:20px;height:20px;background:#663333;border-top:1px solid rgba(0,0,0,0.35)"></div>
<div class="a" style="left:972px;top:639px;width:20px;height:20px;background:#ccccff;border-top:1px solid rgba(0,0,0,0.35)"></div>
<div class="a" style="left:972px;top:659px;width:20px;height:8px;background:#9999ff;border-top:1px solid rgba(0,0,0,0.35)"></div>
<div class="a" style="left:971px;top:222px;width:1px;height:445px;background:#8a8a8a"></div><div class="a" style="left:992px;top:222px;width:1px;height:445px;background:#8a8a8a"></div>
<svg class="a" style="left:975px;top:672px" width="14" height="10" viewBox="0 0 14 10"><path d="M2 2 L7 7 L12 2" stroke="#aaa" stroke-width="2" fill="none"/></svg>
<svg class="a" style="left:975px;top:693px" width="14" height="11" viewBox="0 0 14 11"><path d="M1.5 1 L6 5.5 L1.5 10 M7.5 1 L12 5.5 L7.5 10" stroke="#aaa" stroke-width="2" fill="none"/></svg>
<div class="a" style="left:944px;top:674px;width:4px;height:18px;background:#cacaca"></div>
<div class="a" style="left:944px;top:694px;width:5px;height:22px;background:#f4f4f4;border-top:1px solid #e0e0e0"></div>
<!-- status bar -->
<div class="a" style="left:20px;top:716px;width:972px;height:37px;background:#f7f7f7"></div>
<!-- status bar -->
<div class="a" style="left:20px;top:715px;width:972px;height:1px;background:#e2e2e2"></div>
<div class="t" style="left:24px;top:728px;font-size:14px;color:#222;letter-spacing:-0.35px">( 55.380, 193.653 )</div>
<div class="a" style="left:149px;top:727px;width:14px;height:14px;border:1.5px solid #222;background:#fff"></div>
<svg class="a" style="left:153px;top:730px" width="6" height="8"><path d="M0 0 L6 4 L0 8 Z" fill="#111"/></svg>
<div class="t" style="left:204px;top:727px;font-size:15px;color:#222">矩形 于 图层 1</div>
<svg class="a" style="left:464px;top:728px" width="15" height="14" viewBox="0 0 15 14"><rect x="0.5" y="0.5" width="14" height="11" fill="#e8e0f0" stroke="#6a6a9a"/><rect x="3" y="3" width="9" height="6" fill="none" stroke="#b04050"/><rect x="5" y="5" width="5" height="2" fill="#6a6a9a"/><path d="M2 13.5 H13" stroke="#999"/></svg>
<svg class="a" style="left:492px;top:726px" width="17" height="16" viewBox="0 0 17 16"><path d="M3 7 L8 2 L13 7 L8 12 Z" fill="#fff" stroke="#3a3f60" stroke-width="1.3"/><path d="M3.5 7.5 L12.5 7.5 L8 12 Z" fill="#d8783a"/><path d="M13 8 Q16 11 14 13 Q12 12 13 8 Z" fill="#d8783a"/></svg>
<div class="a" style="left:514px;top:725px;width:19px;height:19px;background:#000"></div>
<div class="t" style="left:537px;top:729px;font-size:14px;color:#222;letter-spacing:-0.4px">R: 0 G: 0 B: 0 (#000000)</div>
<div class="a" style="left:734px;top:718px;width:1px;height:36px;background:#e0e0e0"></div>
<svg class="a" style="left:742px;top:726px" width="10" height="16" viewBox="0 0 10 16"><path d="M5 1 L9 9 L7 12 L3 12 L1 9 Z" fill="#fff" stroke="#444" stroke-width="1.1"/><path d="M5 5 V9" stroke="#444"/><path d="M2 14.5 H8" stroke="#444" stroke-width="1.4"/></svg>
<div class="a" style="left:760px;top:725px;width:20px;height:19px;background:#000"></div>
<div class="t" style="left:765px;top:725px;font-size:17px;color:#e8e8e8">J</div><div class="a" style="left:776px;top:724px;width:1px;height:9px;background:#ddd"></div>
<div class="t" style="left:784px;top:729px;font-size:14px;color:#222;letter-spacing:-0.4px">R: 0 G: 0 B: 0 (#000000)&nbsp;&nbsp; .567 pt</div>


<div class="t" style="left:785px;top:713px;font-size:19px;color:rgba(255,255,255,0.7);text-shadow:0 0 1px rgba(120,120,120,0.2)">jingyan.baidu.com</div>
<svg class="a" style="left:0;top:355px" width="100" height="35" viewBox="0 355 100 35"><path d="M-1 373 C20 379.5, 40 382.8, 62 382.5 C78 382, 86 380, 90 374 L95.5 365.5" stroke="#e01a1a" stroke-width="2.4" stroke-linecap="round" fill="none"/></svg>
</body></html>
